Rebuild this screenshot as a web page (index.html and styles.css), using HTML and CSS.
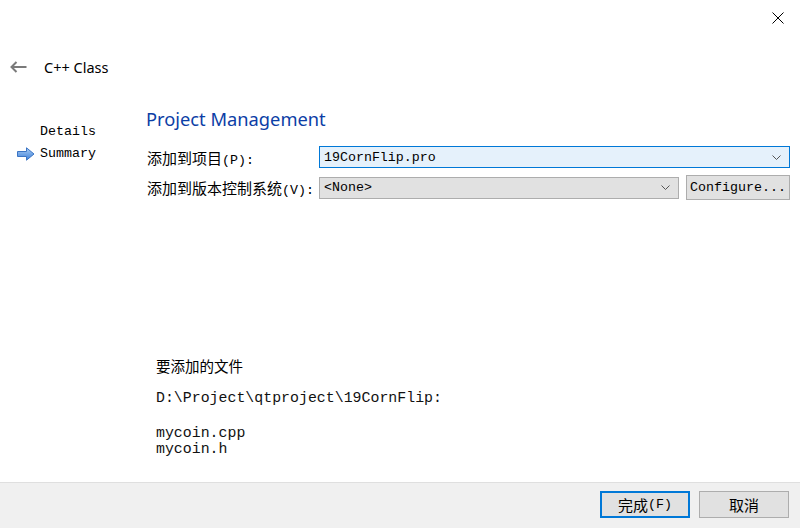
FILE: index.html
```html
<!DOCTYPE html>
<html>
<head>
<meta charset="utf-8">
<link rel="stylesheet" href="styles.css">
</head>
<body>
<div class="dialog">
  <div class="titlebar">
    <span class="close">
      <svg width="12" height="12" viewBox="0 0 12 12"><path d="M0.5 0.5L11.5 11.5M11.5 0.5L0.5 11.5" stroke="#000" stroke-width="1" fill="none"/></svg>
    </span>
  </div>
  <div class="header">
    <svg class="back" width="17" height="12" viewBox="0 0 17 12"><path d="M1.5 6H16.5M6.5 1L1.5 6L6.5 11" stroke="#7a7a7a" stroke-width="2" fill="none"/></svg>
    <span class="header-title">C++ Class</span>
  </div>
  <div class="body">
    <nav class="steps">
      <div class="step"><span class="step-icon"></span>Details</div>
      <div class="step current"><span class="step-icon">
        <svg width="18" height="14" viewBox="0 0 18 14"><defs><linearGradient id="g" x1="0" y1="0" x2="0" y2="1"><stop offset="0" stop-color="#a9cdf5"/><stop offset="1" stop-color="#3d7fd6"/></linearGradient></defs><path d="M0.5 4.5H9.5V0.8L17 7L9.5 13.2V9.5H0.5Z" fill="url(#g)" stroke="#3b74c4" stroke-width="1"/></svg>
      </span>Summary</div>
    </nav>
    <section class="page">
      <h1 class="page-title">Project Management</h1>
      <div class="form">
        <label class="lbl"><span class="cjk">添加到项目</span>(P):</label>
        <div class="combo focus"><span>19CornFlip.pro</span><svg class="chev" width="9" height="5" viewBox="0 0 9 5"><path d="M0.5 0.5L4.5 4.5L8.5 0.5" stroke="#555" fill="none"/></svg></div>
        <label class="lbl"><span class="cjk">添加到版本控制系统</span>(V):</label>
        <div class="vcs">
          <div class="combo"><span>&lt;None&gt;</span><svg class="chev" width="9" height="5" viewBox="0 0 9 5"><path d="M0.5 0.5L4.5 4.5L8.5 0.5" stroke="#555" fill="none"/></svg></div>
          <button class="btn-conf">Configure...</button>
        </div>
      </div>
      <div class="files">
        <p class="files-head">要添加的文件</p>
        <p class="mono">D:\Project\qtproject\19CornFlip:</p>
        <p class="mono list">mycoin.cpp<br>mycoin.h</p>
      </div>
    </section>
  </div>
  <footer class="footer">
    <button class="btn default"><span class="cjk">完成</span>(F)</button>
    <button class="btn"><span class="cjk">取消</span></button>
  </footer>
</div>
</body>
</html>
```

FILE: styles.css
```css
* { box-sizing: border-box; }
html, body { margin: 0; padding: 0; }
body { width: 800px; height: 528px; background: #fff; overflow: hidden; }
.dialog { display: flex; flex-direction: column; height: 528px; }

.titlebar { height: 36px; display: flex; justify-content: flex-end; align-items: flex-start; }
.close { margin: 12px 16px 0 0; width: 12px; height: 12px; display: block; }
.close svg { display: block; }

.header { height: 62px; display: flex; align-items: center; padding-left: 10px; }
.back { display: block; margin-right: 17px; }
.header-title { font-family: "Noto Sans", sans-serif; font-size: 14.5px; color: #000; }

.body { flex: 1; display: flex; }
.steps { width: 146px; padding-top: 23px; font-family: "Liberation Mono", monospace; font-size: 13.3px; color: #000; }
.step { height: 22px; line-height: 22px; display: flex; align-items: center; }
.step-icon { width: 40px; padding-left: 17px; display: flex; align-items: center; }
.step-icon svg { display: block; }

.page { flex: 1; display: flex; flex-direction: column; padding: 8px 10px 25px 0; }
.page-title { margin: 0; font-family: "Noto Sans", sans-serif; font-weight: normal; font-size: 18.3px; line-height: 26px; color: #0c3ea6; }

.form { margin-top: 14px; display: grid; grid-template-columns: 173px 1fr; row-gap: 7px; align-items: center; font-family: "Liberation Mono", "Noto Sans CJK SC", monospace; font-size: 13.3px; color: #000; }
.lbl { padding-left: 1px; white-space: nowrap; }
.cjk { font-family: "Noto Sans CJK SC", sans-serif; font-size: 15px; }
.combo { height: 22px; border: 1px solid #adadad; background: #e1e1e1; display: flex; align-items: center; justify-content: space-between; padding: 0 8px 0 4px; }
.combo.focus { border-color: #0078d7; background: #e5f1fb; }
.chev { display: block; }
.vcs { display: flex; align-items: center; gap: 7px; }
.vcs .combo { flex: 1; }
.btn-conf { height: 25px; width: 104px; border: 1px solid #adadad; background: #e1e1e1; font-family: "Liberation Mono", monospace; font-size: 13.3px; color: #000; padding: 0; }

.files { margin-top: auto; padding-left: 10px; }
.files p { margin: 0; }
.files-head { font-family: "Noto Sans CJK SC", sans-serif; font-size: 14.5px; line-height: 20px; color: #000; }
.mono { font-family: "Liberation Mono", monospace; font-size: 14.9px; line-height: 16px; color: #111; }
.files-head + .mono { margin-top: 14px; }
.list { margin-top: 19px !important; }

.footer { height: 46px; border-top: 1px solid #dfdfdf; background: #f0f0f0; display: flex; justify-content: flex-end; align-items: flex-start; padding: 8px 11px 0 0; gap: 9px; }
.btn { width: 90px; height: 27px; border: 1px solid #adadad; background: #e1e1e1; font-family: "Liberation Mono", monospace; font-size: 13.3px; color: #000; padding: 0; display: flex; align-items: center; justify-content: center; }
.btn.default { border: 2px solid #0078d7; }
```
